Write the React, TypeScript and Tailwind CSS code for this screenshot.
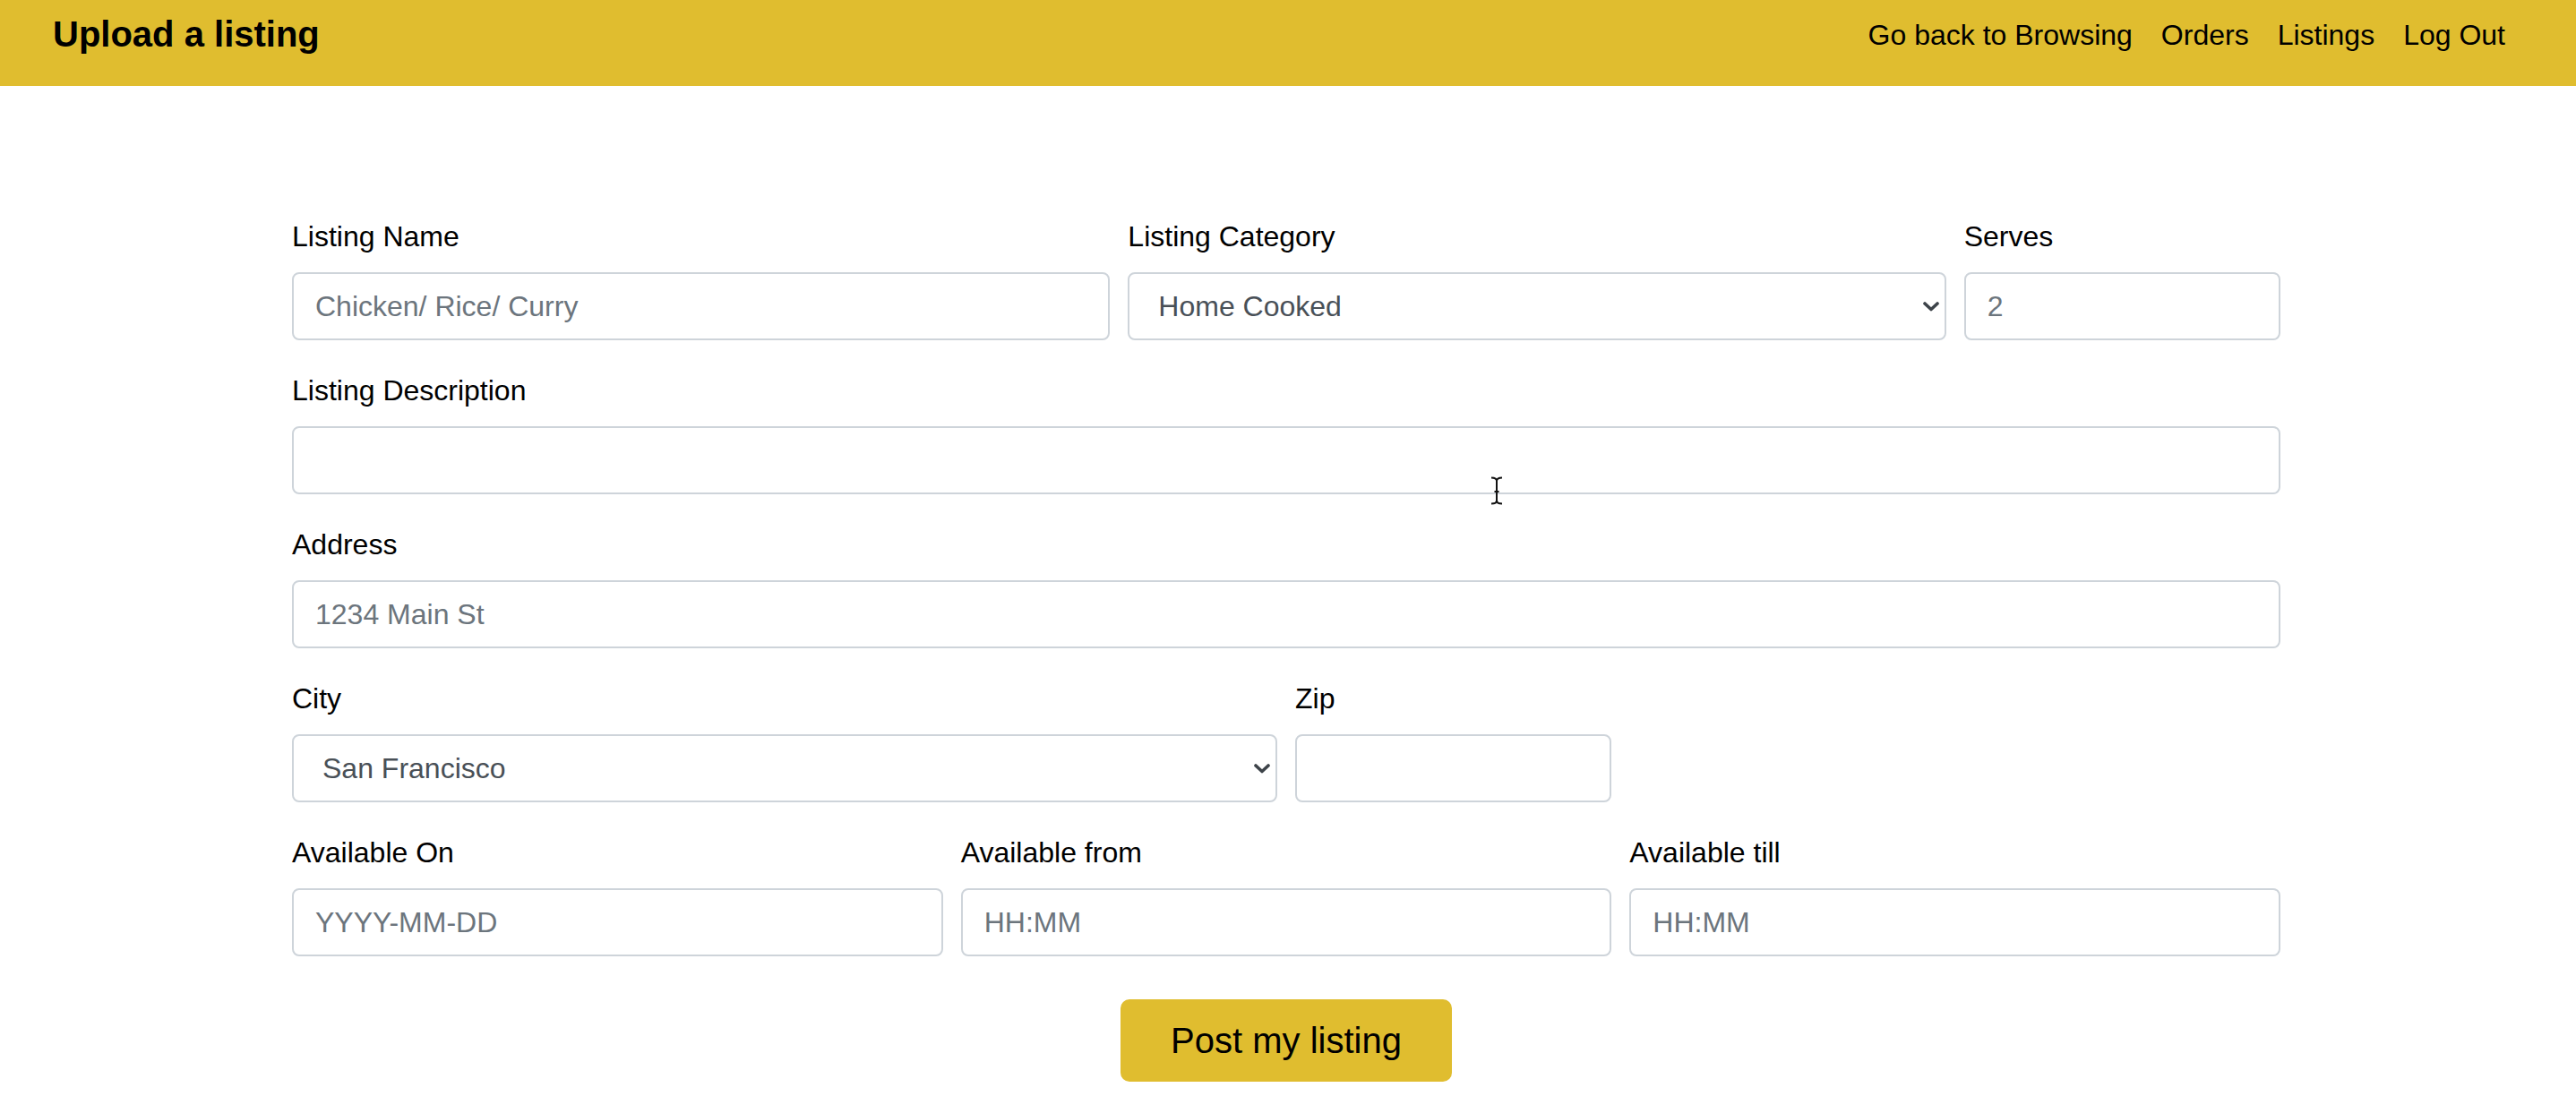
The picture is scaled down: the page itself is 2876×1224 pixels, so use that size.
import { ReactNode } from "react";

const FONT = "font-['Liberation_Sans',Arial,Helvetica,sans-serif]";

const inputClass =
  "block h-[76px] w-full rounded-[8px] border-2 border-[#ced4da] bg-white px-[24px] text-[32px] text-[#495057] outline-none placeholder:text-[#6c757d]";

function Field({
  label,
  span,
  children,
}: {
  label: string;
  span: string;
  children: ReactNode;
}) {
  return (
    <div className={`${span} mb-[32px]`}>
      <label className="mb-[16px] block text-[32px] leading-[48px] text-black">
        {label}
      </label>
      {children}
    </div>
  );
}

function Select({ value, options }: { value: string; options: string[] }) {
  return (
    <div className="relative">
      <select
        defaultValue={value}
        className={`${inputClass} appearance-none pl-[32px] pr-[40px]`}
      >
        {options.map((o) => (
          <option key={o}>{o}</option>
        ))}
      </select>
      <svg
        className="pointer-events-none absolute right-[8px] top-[33px]"
        width="18"
        height="11"
        viewBox="0 0 18 11"
        fill="none"
        aria-hidden
      >
        <path
          d="M2 2 L9 8.5 L16 2"
          stroke="#3d4349"
          strokeWidth="3.6"
          strokeLinecap="round"
          strokeLinejoin="round"
        />
      </svg>
    </div>
  );
}

// mouse cursor caught in the screenshot
function IBeam() {
  return (
    <svg
      className="pointer-events-none absolute left-[1337px] top-[56px]"
      width="16"
      height="32"
      viewBox="0 0 16 32"
      fill="none"
      aria-hidden
    >
      <path
        d="M2 1.5 Q8 1.5 8 5 Q8 1.5 14 1.5 M8 5 V27 M2 30.5 Q8 30.5 8 27 Q8 30.5 14 30.5 M5.5 17 H10.5"
        stroke="#111"
        strokeWidth="2"
      />
    </svg>
  );
}

export default function App() {
  return (
    <div className={`min-h-[1224px] bg-white ${FONT}`}>
      <header className="flex h-[96px] items-start justify-between bg-[#e0bd2f] pl-[59px] pr-[79px] pt-[14px]">
        <h1 className="text-[40px] font-bold leading-[48px] text-black">
          Upload a listing
        </h1>
        <nav className="mt-[1px] flex gap-[32px] text-[32px] leading-[48px] text-black">
          <a href="#">Go back to Browsing</a>
          <a href="#">Orders</a>
          <a href="#">Listings</a>
          <a href="#">Log Out</a>
        </nav>
      </header>

      <form className="ml-[326px] mt-[144px] w-[2220px]">
        <div className="grid grid-cols-12 gap-x-[20px]">
          <Field label="Listing Name" span="col-span-5">
            <input className={inputClass} placeholder="Chicken/ Rice/ Curry" />
          </Field>
          <Field label="Listing Category" span="col-span-5">
            <Select
              value="Home Cooked"
              options={["Home Cooked", "Restaurant", "Groceries"]}
            />
          </Field>
          <Field label="Serves" span="col-span-2">
            <input className={inputClass} placeholder="2" />
          </Field>
        </div>

        <div className="grid grid-cols-12 gap-x-[20px]">
          <Field label="Listing Description" span="col-span-12">
            <div className="relative">
              <input className={inputClass} />
              <IBeam />
            </div>
          </Field>
        </div>

        <div className="grid grid-cols-12 gap-x-[20px]">
          <Field label="Address" span="col-span-12">
            <input className={inputClass} placeholder="1234 Main St" />
          </Field>
        </div>

        <div className="grid grid-cols-12 gap-x-[20px]">
          <Field label="City" span="col-span-6">
            <Select
              value="San Francisco"
              options={["San Francisco", "Oakland", "San Jose"]}
            />
          </Field>
          <Field label="Zip" span="col-span-2">
            <input className={inputClass} />
          </Field>
        </div>

        <div className="grid grid-cols-12 gap-x-[20px]">
          <Field label="Available On" span="col-span-4">
            <input className={inputClass} placeholder="YYYY-MM-DD" />
          </Field>
          <Field label="Available from" span="col-span-4">
            <input className={inputClass} placeholder="HH:MM" />
          </Field>
          <Field label="Available till" span="col-span-4">
            <input className={inputClass} placeholder="HH:MM" />
          </Field>
        </div>

        <button
          type="submit"
          className="mx-auto mt-[16px] block h-[92px] w-[370px] rounded-[10px] bg-[#e0bd2f] text-[40px] text-black"
        >
          Post my listing
        </button>
      </form>
    </div>
  );
}
